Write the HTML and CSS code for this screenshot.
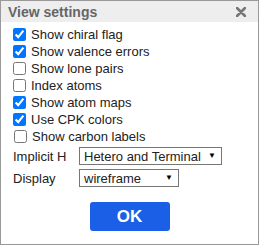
FILE: index.html
```html
<!DOCTYPE html>
<html lang="en">
<head>
  <meta charset="UTF-8">
  <title>View settings</title>
  <link rel="stylesheet" href="styles.css">
</head>
<body>
  <div class="dialog">
    <div class="titlebar">
      <span class="title">View settings</span>
      <svg class="close" width="10" height="10" viewBox="0 0 10 10">
        <path d="M1 1 L9 9 M9 1 L1 9" stroke="#777" stroke-width="2.6" stroke-linecap="round"/>
      </svg>
    </div>
    <div class="content">
      <label class="row"><input type="checkbox" checked> Show chiral flag</label>
      <label class="row"><input type="checkbox" checked> Show valence errors</label>
      <label class="row"><input type="checkbox"> Show lone pairs</label>
      <label class="row"><input type="checkbox"> Index atoms</label>
      <label class="row"><input type="checkbox" checked> Show atom maps</label>
      <label class="row"><input type="checkbox" checked> Use CPK colors</label>
      <label class="row carbon"><input type="checkbox"> Show carbon labels</label>
      <div class="field">
        <span class="field-label">Implicit H</span>
        <span class="select-wrap">
          <select class="long">
            <option>Hetero and Terminal</option>
            <option>All</option>
            <option>None</option>
          </select>
          <span class="arrow">&#9660;</span>
        </span>
      </div>
      <div class="field">
        <span class="field-label">Display</span>
        <span class="select-wrap">
          <select class="short">
            <option>wireframe</option>
            <option>ball and stick</option>
          </select>
          <span class="arrow">&#9660;</span>
        </span>
      </div>
      <div class="buttons">
        <button class="ok">OK</button>
      </div>
    </div>
  </div>
</body>
</html>
```
FILE: styles.css
```css
html, body {
  margin: 0;
  padding: 0;
  background: #fff;
}
.dialog {
  width: 257px;
  height: 243px;
  border: 1px solid #999;
  font-family: Arial, "Liberation Sans", sans-serif;
  font-size: 13px;
  color: #222;
}
.titlebar {
  height: 21px;
  background: #eee;
  display: flex;
  align-items: center;
  justify-content: space-between;
  padding: 0 12px 0 7px;
}
.title {
  font-weight: bold;
  font-size: 14px;
  color: #666;
}
.close {
  display: block;
}
.content {
  padding: 4px 0 0 11px;
}
.row {
  display: flex;
  align-items: center;
  height: 17px;
}
.row input {
  width: 13px;
  height: 13px;
  margin: 0 5px 0 1px;
}
.row.carbon input {
  margin-left: 2px;
}
.field {
  display: flex;
  align-items: center;
  height: 22px;
}
.field-label {
  width: 66px;
  padding-left: 1px;
}
.select-wrap {
  position: relative;
  display: inline-block;
}
select {
  appearance: none;
  -webkit-appearance: none;
  font-family: Arial, "Liberation Sans", sans-serif;
  font-size: 13px;
  height: 18px;
  border: 1px solid #767676;
  border-radius: 0;
  padding: 0 18px 0 4px;
  background: #fff;
  color: #222;
  display: block;
}
select.long {
  width: 143px;
}
select.short {
  width: 100px;
}
.arrow {
  position: absolute;
  right: 6px;
  top: 4px;
  font-size: 8px;
  color: #000;
  pointer-events: none;
}
.buttons {
  display: flex;
  justify-content: center;
  padding: 13px 11px 0 0;
}
.ok {
  width: 80px;
  height: 29px;
  background: #1a5fe6;
  color: #fff;
  border: none;
  border-radius: 3px;
  font-family: Arial, "Liberation Sans", sans-serif;
  font-weight: bold;
  font-size: 17px;
}
```
